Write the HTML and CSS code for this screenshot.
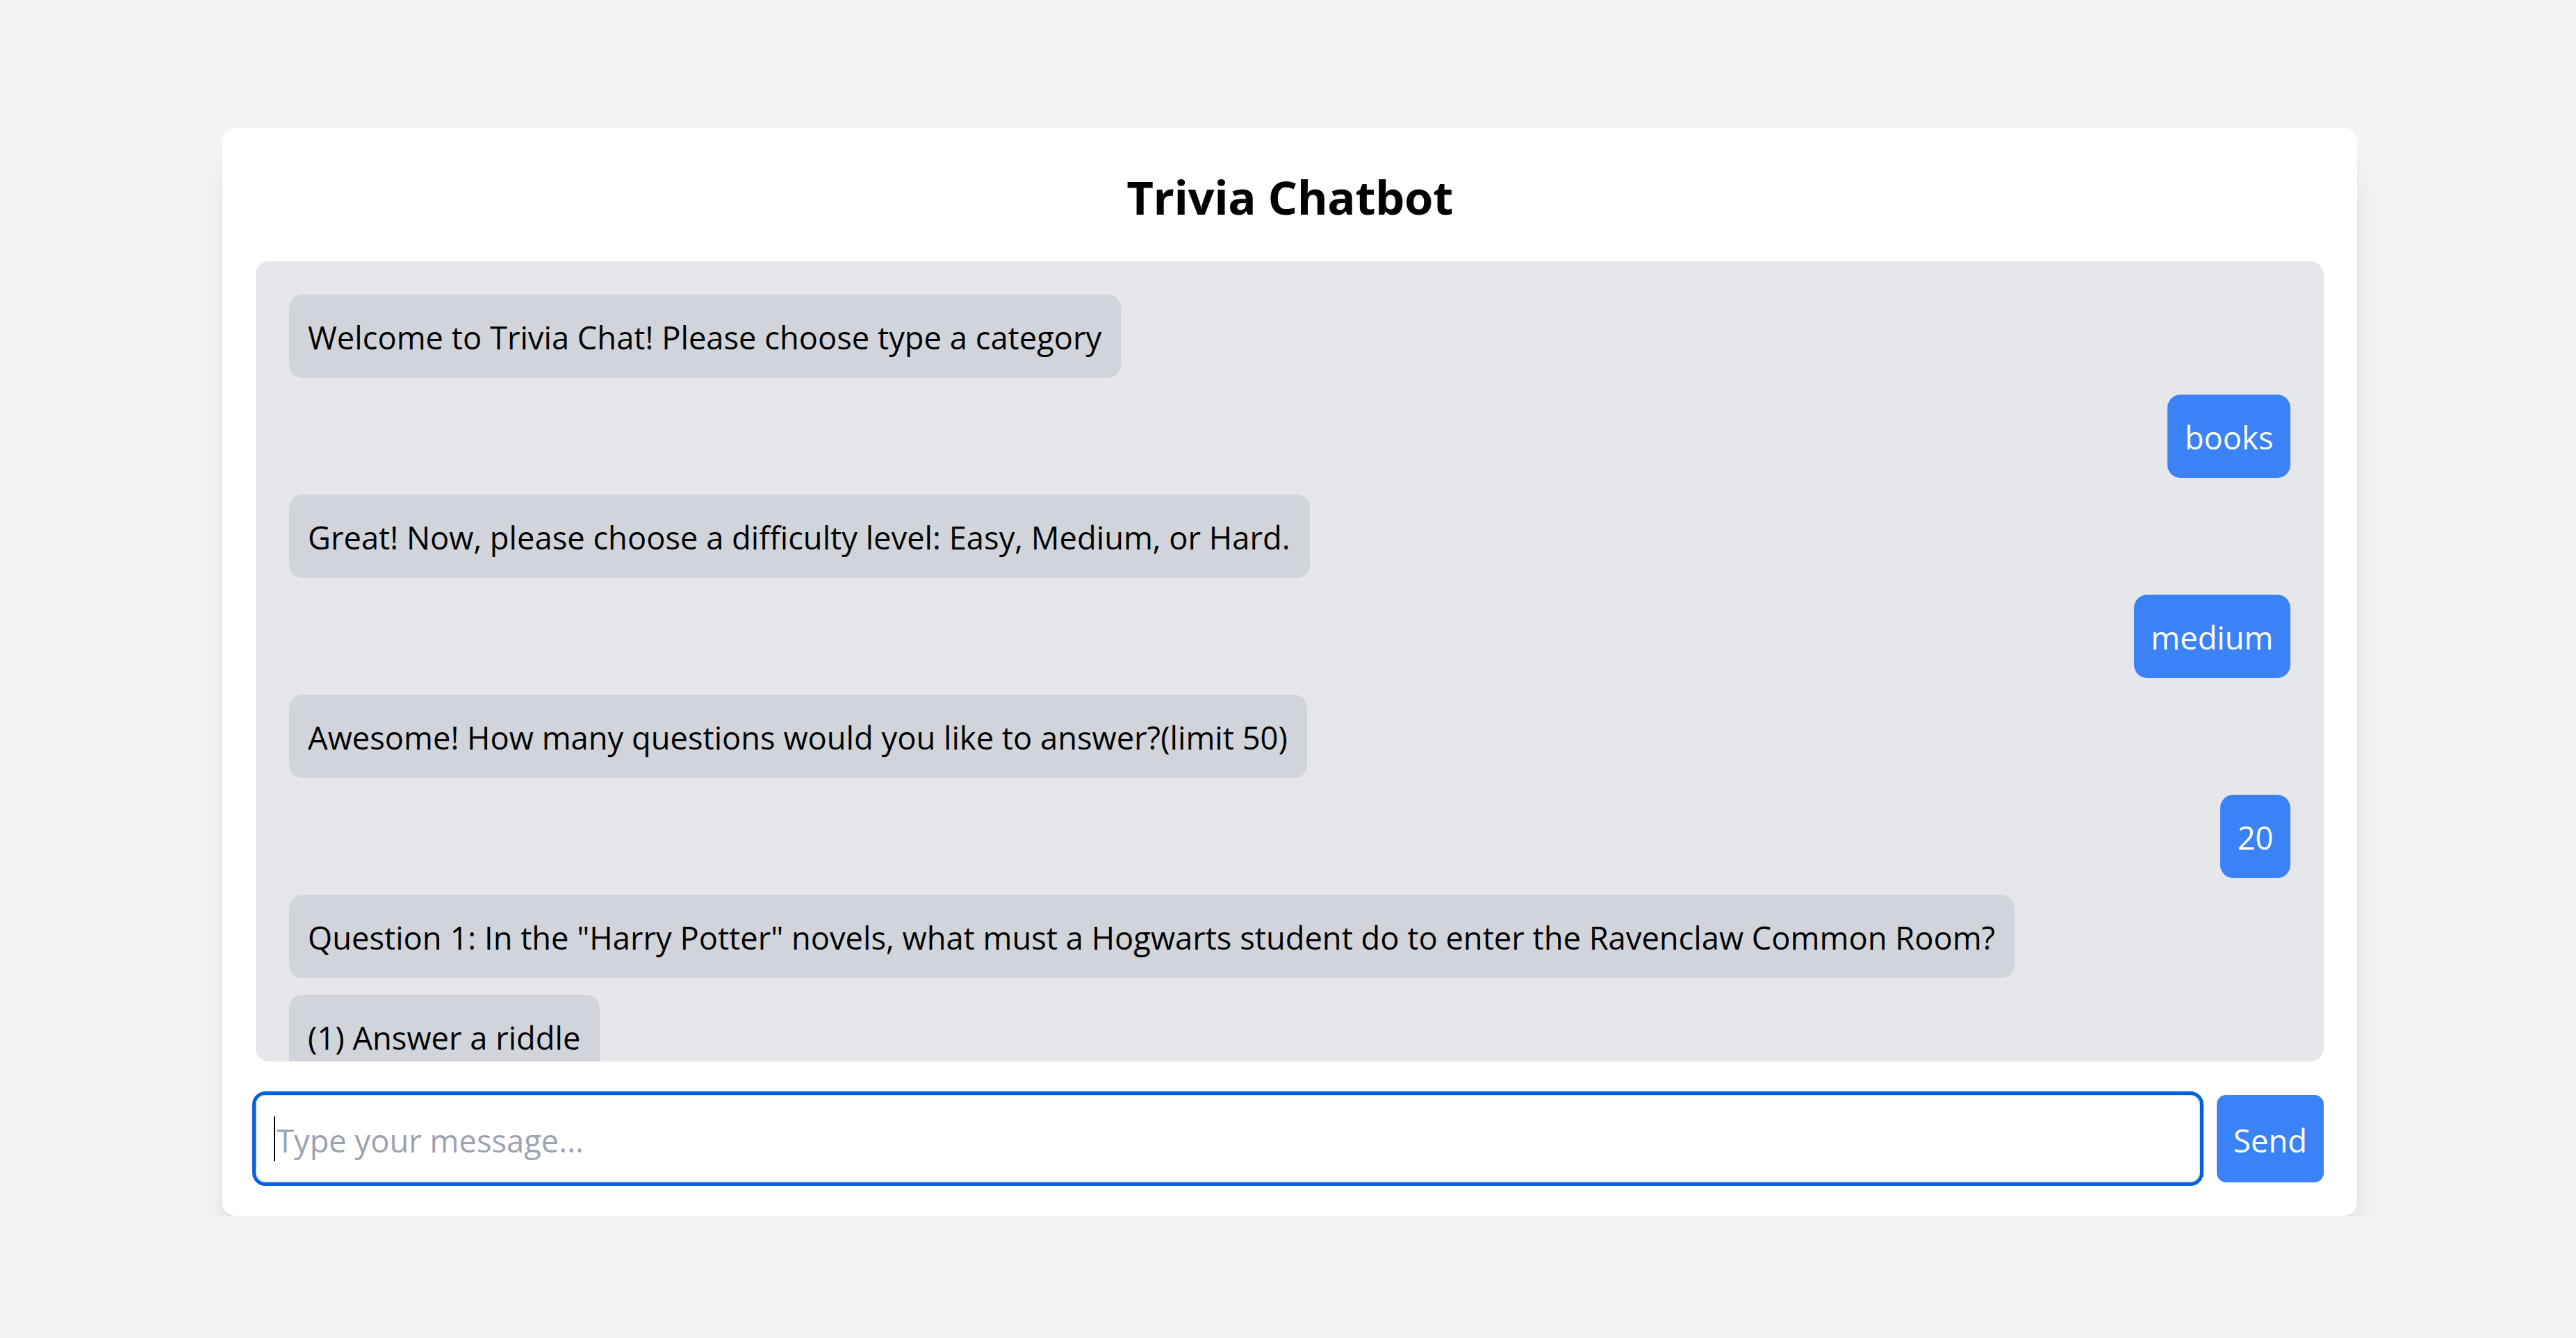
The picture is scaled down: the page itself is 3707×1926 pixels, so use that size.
FILE: index.html
```html
<!DOCTYPE html>
<html lang="en">
<head>
<meta charset="utf-8">
<title>Trivia Chatbot</title>
<link rel="stylesheet" href="styles.css">
</head>
<body>
  <main class="card">
    <h1 class="title">Trivia Chatbot</h1>
    <div class="chat">
      <div class="msg bot"><span class="bubble">Welcome to Trivia Chat! Please choose type a category</span></div>
      <div class="msg user"><span class="bubble">books</span></div>
      <div class="msg bot"><span class="bubble">Great! Now, please choose a difficulty level: Easy, Medium, or Hard.</span></div>
      <div class="msg user"><span class="bubble">medium</span></div>
      <div class="msg bot"><span class="bubble">Awesome! How many questions would you like to answer?(limit 50)</span></div>
      <div class="msg user"><span class="bubble">20</span></div>
      <div class="msg bot"><span class="bubble">Question 1: In the "Harry Potter" novels, what must a Hogwarts student do to enter the Ravenclaw Common Room?</span></div>
      <div class="msg bot"><span class="bubble">(1) Answer a riddle</span></div>
    </div>
    <form class="composer" onsubmit="return false">
      <div class="field">
        <input class="input" type="text" placeholder="Type your message...">
        <span class="caret"></span>
      </div>
      <button class="send" type="button">Send</button>
    </form>
  </main>
</body>
</html>
```
FILE: styles.css
```css
* { box-sizing: border-box; }

html, body {
  margin: 0;
  padding: 0;
}

body {
  background: #f3f4f6;
  font-family: "Open Sans", "Noto Sans", sans-serif;
  color: #000;
  padding-top: 184px;
}

.card {
  margin: 0 315px 0 320px;
  background: #ffffff;
  border-radius: 19px;
  padding: 48px;
  box-shadow: 0 48px 60px -12px rgba(0, 0, 0, 0.10), 0 19px 24px -14px rgba(0, 0, 0, 0.10);
}

.title {
  margin: 0 0 49.6px 0;
  padding-top: 8px;
  text-align: center;
  font-size: 67px;
  line-height: 86.4px;
  font-weight: 700;
  letter-spacing: -0.4px;
}

.chat {
  height: 1152px;
  background: #e5e7eb;
  border-radius: 19px;
  padding: 48px;
  overflow: hidden;
  display: flex;
  flex-direction: column;
  gap: 24px;
}

.msg {
  display: flex;
  flex-shrink: 0;
}

.msg.user { justify-content: flex-end; }

.bubble {
  display: block;
  padding: 31px 28px 26.6px 27px;
  line-height: 62.4px;
  font-size: 45.3px;
  border-radius: 19px;
  white-space: nowrap;
}

.bot .bubble {
  background: #d1d5db;
  color: #000;
}

.user .bubble {
  background: #3b82f6;
  color: #ffffff;
  padding-left: 24.5px;
  padding-right: 24.5px;
}

.composer {
  margin: 48px 0 0 0;
  display: flex;
  gap: 24px;
  height: 126px;
}

.field {
  flex: 1;
  position: relative;
  display: flex;
}

.input {
  flex: 1;
  height: 126px;
  border: 2.4px solid #e5e7eb;
  border-radius: 14px;
  padding: 4px 28px 0 28px;
  font-family: "Open Sans", "Noto Sans", sans-serif;
  font-size: 45.3px;
  color: #000;
  background: #fff;
  outline: 5.5px solid #0060df;
  outline-offset: 0;
}

.input::placeholder { color: #9ca3af; }

.caret {
  position: absolute;
  left: 26px;
  top: 31px;
  width: 2.4px;
  height: 64px;
  background: #000;
}

.send {
  width: 154px;
  height: 126px;
  border: 0;
  border-radius: 14px;
  background: #3b82f6;
  color: #fff;
  font-family: "Open Sans", "Noto Sans", sans-serif;
  font-size: 45.3px;
  padding: 4px 0 0 0;
}
```
